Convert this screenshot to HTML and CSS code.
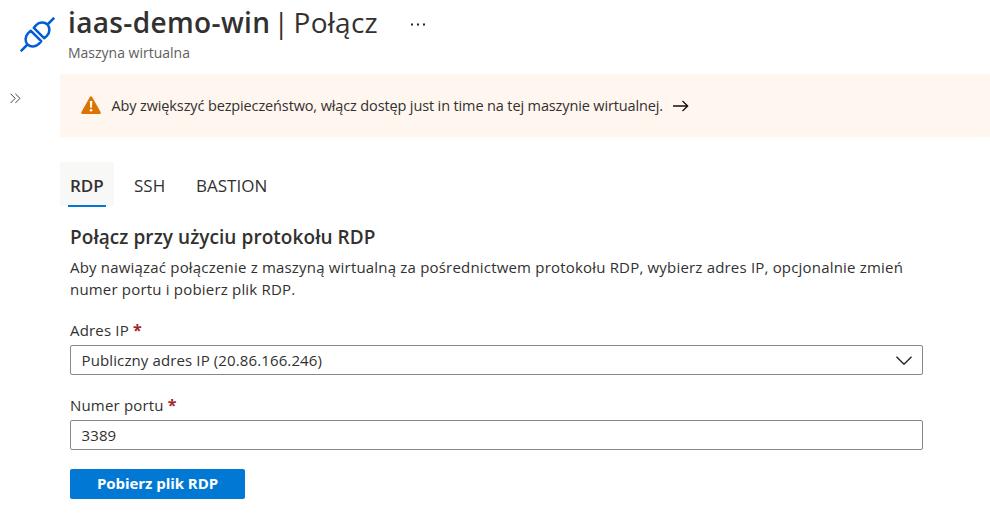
FILE: index.html
```html
<!DOCTYPE html>
<html lang="pl">
<head>
<meta charset="utf-8">
<title>iaas-demo-win | Połącz</title>
<link rel="stylesheet" href="styles.css">
</head>
<body>
<header class="header">
  <svg class="plug" viewBox="0 0 36 36" fill="none" stroke="#015cda" stroke-width="2.6" stroke-linejoin="round">
    <path d="M.8 35.2 7.7 28.3M28.3 7.7 35.2.8"/>
    <path d="M11.2 14.2 21.8 24.8 19.4 27.6C16 31 11 31 7.7 28.3 5 25 5 20 8.4 16.6Z"/>
    <path d="M14.2 11.2 24.8 21.8 27.6 19.4C31 16 31 11 28.3 7.7 25 5 20 5 16.6 8.4Z"/>
  </svg>
  <div class="heading">
    <h1 class="title"><span class="name">iaas-demo-win</span><span class="section">| Połącz</span></h1>
    <p class="subtitle">Maszyna wirtualna</p>
  </div>
  <svg class="more" viewBox="0 0 14 3" fill="#222"><path d="M0 .5h2v2H0zM6 .5h2v2H6zM12 .5h2v2h-2z"/></svg>
</header>
<div class="body">
  <aside class="rail">
    <svg class="expand" viewBox="0 0 11 11" fill="none" stroke="#444" stroke-width="1"><path d="M.6.8 5.2 5.4.6 10M5.4.8 10 5.4 5.4 10"/></svg>
  </aside>
  <main class="main">
    <div class="banner">
      <svg class="warning" viewBox="0 0 20 18"><path d="M8.9.9Q10-.6 11.1.9L19.6 16Q20.3 18 18.4 18H1.6Q-.3 18 .4 16Z" fill="#db7500"/><path d="M8.8 5h2.5l-.4 6.8H9.2z" fill="#fff"/><circle cx="10.05" cy="14.2" r="1.3" fill="#fff"/></svg>
      <span class="banner-text">Aby zwiększyć bezpieczeństwo, włącz dostęp just in time na tej maszynie wirtualnej.</span>
      <svg class="arrow" viewBox="0 0 16 12" fill="none" stroke="#111" stroke-width="1.3"><path d="M0 6h15M9.5 1l5.2 5-5.2 5"/></svg>
    </div>
    <nav class="tabs">
      <a class="tab active">RDP</a>
      <a class="tab">SSH</a>
      <a class="tab">BASTION</a>
    </nav>
    <section class="panel">
      <h2 class="panel-title">Połącz przy użyciu protokołu RDP</h2>
      <p class="description">Aby nawiązać połączenie z maszyną wirtualną za pośrednictwem protokołu RDP, wybierz adres IP, opcjonalnie zmień<br>numer portu i pobierz plik RDP.</p>
      <div class="label">Adres IP<b class="required">*</b></div>
      <div class="field"><span>Publiczny adres IP (20.86.166.246)</span>
        <svg class="chevron" viewBox="0 0 16 9" fill="none" stroke="#222" stroke-width="1.4"><path d="M.5.7 8 8.2 15.5.7"/></svg>
      </div>
      <div class="label">Numer portu<b class="required">*</b></div>
      <div class="field"><span>3389</span></div>
      <button class="download">Pobierz plik RDP</button>
    </section>
  </main>
</div>
</body>
</html>
```
FILE: styles.css
```css
* { box-sizing: border-box; }
body { margin: 0; background: #fff; color: #323130; font-family: "Open Sans", "Noto Sans", sans-serif; font-size: 15px; overflow: hidden; }
h1, h2, p { margin: 0; font-weight: 400; }
svg { display: block; flex: none; }
span { white-space: nowrap; }
.header { display: flex; align-items: flex-start; height: 74px; padding-left: 20px; }
.plug { width: 35px; height: 35px; margin-top: 17px; }
.heading { margin-left: 13px; width: 311px; }
.title { display: flex; gap: 3px; font-size: 28px; line-height: 36px; padding-top: 4px; }
.name { font-weight: 600; letter-spacing: .36px; }
.section { word-spacing: -3px; letter-spacing: .25px; }
.subtitle { font-size: 14px; line-height: 20px; margin-top: 3px; color: #605e5c; }
.more { width: 14px; height: 3px; margin: 23px 0 0 32px; }
.body { display: flex; }
.rail { width: 60px; padding: 19px 0 0 9.5px; }
.expand { width: 11px; height: 11px; }
.main { flex: 1; }
.banner { display: flex; align-items: center; height: 63px; padding-left: 21px; background: #fff6ef; }
.warning { width: 20px; height: 18px; margin-top: -2px; }
.banner-text { margin-left: 10.5px; width: 551.5px; font-size: 14.5px; letter-spacing: -.13px; }
.arrow { width: 16px; height: 12px; margin-left: 10px; }
.tabs { display: flex; margin-top: 25px; height: 45px; font-size: 17px; line-height: 47px; }
.tab { position: relative; padding: 0 10px; height: 44px; }
.tab:nth-child(1) { width: 54px; }
.tab:nth-child(2) { margin-left: 10px; width: 52px; }
.tab:nth-child(3) { margin-left: 10px; }
.active { background: #f8f8f7; font-weight: 600; }
.active::after { content: ""; position: absolute; left: 8px; right: 8px; bottom: -1px; height: 2px; background: #0078d4; }
.panel { width: 863px; padding-left: 10px; }
.panel-title { margin-top: 17px; font-size: 19px; line-height: 26px; font-weight: 600; letter-spacing: .06px; }
.description { margin-top: 6px; line-height: 22px; letter-spacing: .19px; white-space: nowrap; }
.label { display: flex; gap: 4px; line-height: 20px; margin-top: 20px; letter-spacing: .18px; }
.required { color: #a4262c; font-size: 16px; }
.field { display: flex; align-items: center; justify-content: space-between; height: 30px; margin-top: 5px; padding: 0 10.5px; border: 1px solid #8a8886; border-radius: 2px; letter-spacing: .12px; }
.chevron { width: 16px; height: 9px; }
.download { display: flex; align-items: center; justify-content: center; width: 175px; height: 30px; margin-top: 19px; padding: 0 0 2px; border: 0; border-radius: 2px; background: #0078d4; color: #fff; font: 700 15px "Open Sans", sans-serif; letter-spacing: -.05px; }
```
